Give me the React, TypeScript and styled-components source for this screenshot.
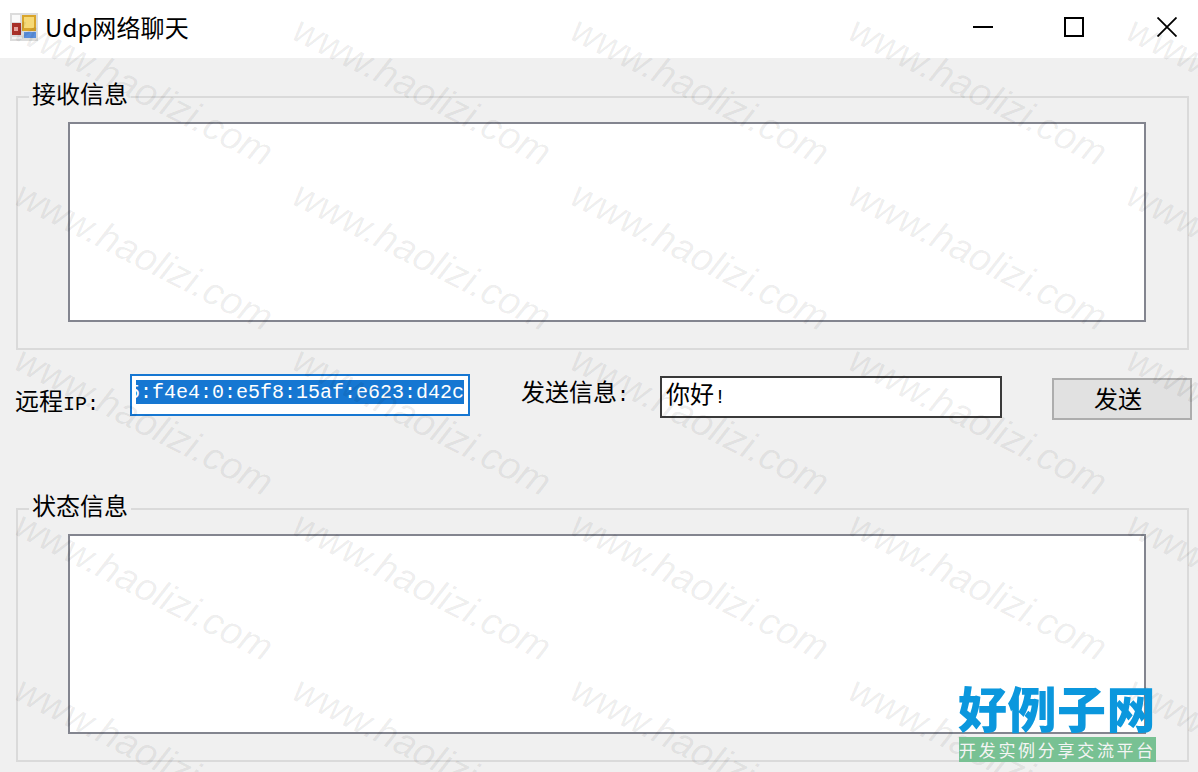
import React from 'react';
import styled, { createGlobalStyle } from 'styled-components';

const cjk = '"Noto Sans CJK SC", "Noto Sans", sans-serif';
const bitmap = '"Liberation Mono", "Noto Sans CJK SC", monospace';

const GlobalStyle = createGlobalStyle`
    html, body { margin: 0; padding: 0; background: #f0f0f0; }
    body { font-family: ${cjk}; color: #000; }
`;

const Window = styled.div`
    position: relative;
    width: 1198px;
    height: 772px;
    overflow: hidden;
    background: #f0f0f0;
`;

const TitleBar = styled.header`
    box-sizing: border-box;
    height: 58px;
    background: #fff;
    display: flex;
    align-items: center;
    padding: 0 21px 4px 10px;
`;

const Title = styled.h1`
    margin: 0 0 0 7px;
    flex: 1;
    font: 400 24px/30px "Noto Sans CJK SC", "Noto Sans", sans-serif;
    letter-spacing: 0.1px;
`;

const Controls = styled.div`
    display: flex;
    gap: 71px;
`;

const Content = styled.main`
    display: flex;
    flex-direction: column;
    padding: 0 9px 0 16px;
`;

const Group = styled.fieldset<{ $top: number }>`
    margin: ${(p) => p.$top}px 0 0;
    padding: 7px 41px 26px 0;
    border: 2px solid #dadada;
    min-width: 0;
`;

const Legend = styled.legend`
    margin-left: 11px;
    padding: 0 3px 8px;
    font: 400 24px/28px ${cjk};
`;

const TextArea = styled.div`
    height: 196px;
    margin-left: 50px;
    background: #fff;
    border: 2px solid #83858f;
`;

const FormRow = styled.section`
    display: flex;
    align-items: flex-start;
    height: 141px;
    margin-left: -1px;
`;

const FieldLabel = styled.label<{ $top: number; $left?: number; $width: number }>`
    flex: none;
    width: ${(p) => p.$width}px;
    margin: ${(p) => p.$top}px 0 0 ${(p) => p.$left ?? 0}px;
    font: 400 24px/26px ${cjk};
    white-space: nowrap;
`;

// half-width latin characters sit at 12px per glyph, like the system font in the picture
const Ascii = styled.span`
    font: 400 20px/26px ${bitmap};
`;

const IpField = styled.div`
    flex: none;
    box-sizing: border-box;
    width: 340px;
    height: 42px;
    margin-top: 24px;
    padding: 4px;
    background: #fff;
    border: 2px solid #1677d2;
`;

const SelectionClip = styled.div`
    height: 24px;
    display: flex;
    justify-content: flex-end;
    overflow: hidden;
`;

const Selected = styled.span`
    flex: none;
    background: #1677d2;
    color: #fff;
    font: 400 20px/26px ${bitmap};
    white-space: nowrap;
`;

const MessageField = styled.div`
    flex: none;
    box-sizing: border-box;
    width: 342px;
    height: 42px;
    margin-top: 26px;
    padding: 1px 4px 0;
    background: #fff;
    border: 2px solid #3a3a3a;
    font: 400 24px/28px ${cjk};
`;

const SendButton = styled.button`
    flex: none;
    box-sizing: border-box;
    width: 140px;
    height: 42px;
    margin: 28px 0 0 50px;
    padding: 0 8px 2px 0;
    background: #e1e1e1;
    border: 2px solid #adadad;
    font: 400 24px/36px ${cjk};
    color: #000;
`;

const Watermarks = styled.div`
    position: absolute;
    top: 0;
    left: 0;
    display: grid;
    grid-template-columns: repeat(5, 278px);
    grid-auto-rows: 165px;
    pointer-events: none;
`;

const Mark = styled.span`
    width: 278px;
    height: 165px;
    display: flex;
    align-items: center;
    justify-content: center;
    font: italic 400 38.3px/44px "Liberation Sans", sans-serif;
    color: rgba(0, 0, 0, 0.07);
    white-space: nowrap;
    transform: translate(5.5px, 8px) rotate(27deg);
`;

const Logo = styled.div`
    position: absolute;
    left: 958px;
    top: 678px;
    width: 198px;
    display: flex;
    flex-direction: column;
    align-items: stretch;
`;

const LogoName = styled.div`
    font: 900 49px/58px ${cjk};
    color: #0b97dd;
    white-space: nowrap;
    letter-spacing: 0.5px;
`;

const LogoSlogan = styled.div`
    margin: 1px 0 0 1px;
    height: 25px;
    background: #78c193;
    color: #f4f4f4;
    font: 400 17px/25px ${cjk};
    letter-spacing: 2.7px;
    text-align: center;
    white-space: nowrap;
    overflow: hidden;
`;

const AppIcon = () => (
    <svg width="28" height="28" viewBox="0 0 28 28">
        <rect x="0" y="0" width="28" height="28" fill="#dcdcdc" />
        <rect x="2" y="2" width="8" height="7" fill="#fafafa" />
        <rect x="2" y="10" width="9" height="12" fill="#a83028" />
        <rect x="4" y="14" width="4" height="4" fill="#e6a29c" />
        <rect x="12" y="2" width="14" height="16" fill="#d9a52c" />
        <rect x="14" y="4" width="10" height="11" fill="#f6d977" />
        <rect x="14" y="19" width="12" height="6" fill="#5b8fdc" />
        <rect x="2" y="24" width="10" height="2" fill="#f4f4f4" />
    </svg>
);

const MinimizeIcon = () => (
    <svg width="20" height="20" viewBox="0 0 20 20">
        <path d="M0 9h20v2H0z" fill="#000" />
    </svg>
);

const MaximizeIcon = () => (
    <svg width="22" height="20" viewBox="0 0 22 20">
        <path d="M1 1h18v18H1z" fill="none" stroke="#000" strokeWidth="2" />
    </svg>
);

const CloseIcon = () => (
    <svg width="20" height="20" viewBox="0 0 20 20">
        <path d="M0.5 0.5l19 19M19.5 0.5l-19 19" fill="none" stroke="#000" strokeWidth="1.8" />
    </svg>
);

const App: React.FC = () => {
    return (
        <Window>
            <GlobalStyle />
            <TitleBar>
                <AppIcon />
                <Title>Udp网络聊天</Title>
                <Controls>
                    <MinimizeIcon />
                    <MaximizeIcon />
                    <CloseIcon />
                </Controls>
            </TitleBar>
            <Content>
                <Group $top={21}>
                    <Legend>接收信息</Legend>
                    <TextArea />
                </Group>
                <FormRow>
                    <FieldLabel $top={37} $width={115}>远程<Ascii>IP:</Ascii></FieldLabel>
                    <IpField>
                        <SelectionClip>
                            <Selected>5:f4e4:0:e5f8:15af:e623:d42c</Selected>
                        </SelectionClip>
                    </IpField>
                    <FieldLabel $top={28} $left={51} $width={139}>发送信息<Ascii>:</Ascii></FieldLabel>
                    <MessageField>你好<Ascii>!</Ascii></MessageField>
                    <SendButton>发送</SendButton>
                </FormRow>
                <Group $top={0}>
                    <Legend>状态信息</Legend>
                    <TextArea />
                </Group>
            </Content>
            <Watermarks>
                {Array.from({ length: 25 }, (_, i) => (
                    <Mark key={i}>www.haolizi.com</Mark>
                ))}
            </Watermarks>
            <Logo>
                <LogoName>好例子网</LogoName>
                <LogoSlogan>开发实例分享交流平台</LogoSlogan>
            </Logo>
        </Window>
    );
};

export default App;
